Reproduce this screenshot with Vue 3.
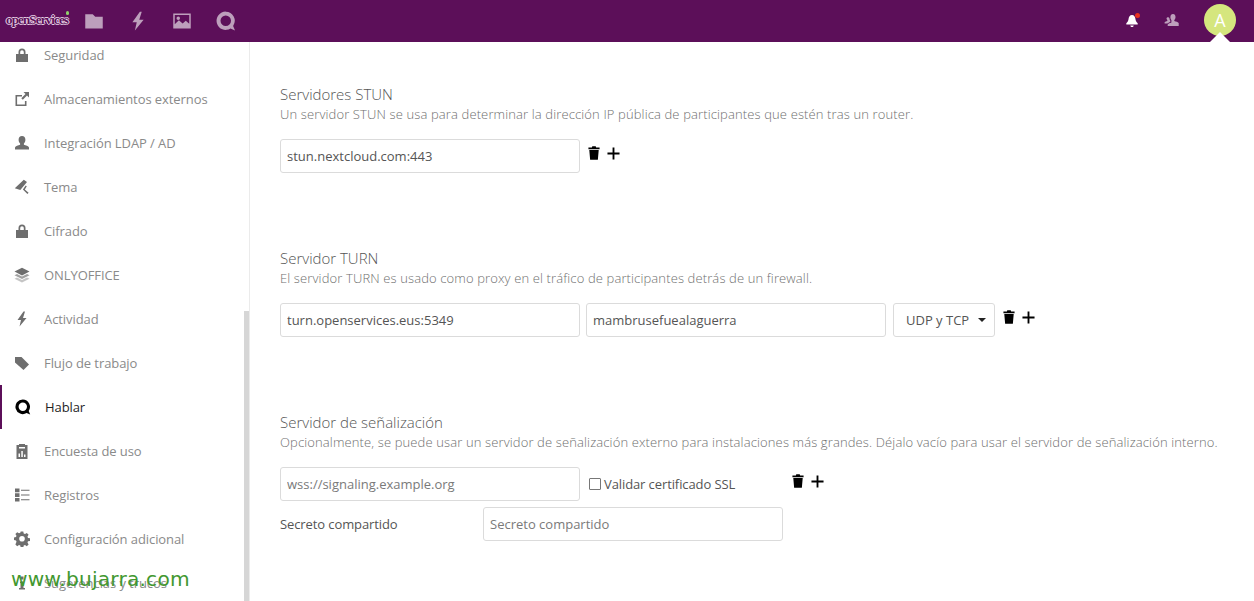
<script setup>
const navIcons = ['folder', 'bolt', 'image', 'talk']
const sideItems = [
  { label: 'Seguridad', icon: 'lock' },
  { label: 'Almacenamientos externos', icon: 'external' },
  { label: 'Integración LDAP / AD', icon: 'user' },
  { label: 'Tema', icon: 'brush' },
  { label: 'Cifrado', icon: 'lock' },
  { label: 'ONLYOFFICE', icon: 'layers' },
  { label: 'Actividad', icon: 'bolt' },
  { label: 'Flujo de trabajo', icon: 'tag' },
  { label: 'Hablar', icon: 'talk', active: true },
  { label: 'Encuesta de uso', icon: 'survey' },
  { label: 'Registros', icon: 'logs' },
  { label: 'Configuración adicional', icon: 'gear' },
  { label: 'Sugerencias y trucos', icon: 'info' }
]
const paths = {
  folder: 'M1 2.500h6l2 2h6V14H1z',
  bolt: 'M9.500 .500 3.500 9H7l-1.500 6.500L12.500 7H9l2-6.500z',
  image: 'M1 2h14v12H1zm1.200 1.200v7.300l3.300-3.200 3 2.700 2.500-2.200 2.800 2.400V3.200zM5 4.400a1.400 1.400 0 1 1 0 2.800 1.400 1.400 0 0 1 0-2.800z',
  talk: 'M7.800 .500a7.300 7.300 0 1 0 3.800 13.500l3.600 1.500-1.500-3.600A7.300 7.300 0 0 0 7.800 .500zm0 3.100a4.200 4.200 0 1 1 0 8.400 4.200 4.200 0 0 1 0-8.400z',
  lock: 'M4.500 7V5a3.500 3.500 0 0 1 7 0v2H14v8H2V7zm1.700 0h3.600V5a1.800 1.800 0 0 0-3.600 0z',
  external: 'M1.500 4H8v1.600H3.100v7.800h7.800V10h1.600v5h-11zM9.500 1H15v5.500l-2-2-4.200 4.200-1.500-1.500L11.500 3z',
  user: 'M8 1c2.200 0 3.400 1.600 3.400 3.800 0 1.600-.7 3-1.500 3.700v1.300c1.800.6 4.700 1.100 5.100 2.700V14.500H1v-2c.4-1.600 3.300-2.100 5.100-2.700V8.500C5.300 7.800 4.600 6.400 4.600 4.800 4.600 2.600 5.800 1 8 1z',
  brush: 'M9.800 .800 13 2.900 6.300 11 .800 9.200zM11.700 6.500 12.800 7.200 10.800 10.400 14.600 13.800 13.400 15 8.900 10.600z',
  tag: 'M1 2h6.500l7.500 7.500-5.500 5.500L1 7.500z',
  survey: 'M2.500 2H5V1h6v1h2.500v14h-11zm2 8.500v3.500H6v-3.500zM7.300 8v6h1.500V8zm2.700 3.500V14h1.500v-2.500zM5 4v1.500h6V4z',
  logs: 'M1 1.500h4.500v3.700H1zM1 6.200h4.500v3.700H1zM1 10.900h4.500v3.700H1zM7 2.800h8.500v1H7zM7 7.500h8.500v1H7zM7 12.200h8.500v1H7z',
  gear: 'M6.700 .500h2.600l.4 2 1.300.6 1.800-1.100 1.800 1.800-1.100 1.800.5 1.300 2 .4v2.600l-2 .4-.5 1.300 1.100 1.800-1.800 1.800-1.800-1.100-1.300.5-.4 2H6.700l-.4-2-1.300-.5-1.800 1.100-1.800-1.800L2.500 10.700 2 9.400 0 9V6.500l2-.4.500-1.300L1.400 3 3.200 1.200 5 2.300l1.300-.6zM8 5a2.800 2.800 0 1 0 0 5.600A2.800 2.800 0 0 0 8 5z',
  info: 'M6.500 1.500h3v3h-3zM6 6.500h3.500V13H11v1.500H5V13h1.500V8H6z'
}
</script>

<template>
  <div class="page">
    <header class="topbar">
      <div class="logo">
        <span class="logo-text">openServices</span>
        <span class="logo-leaf"></span>
      </div>
      <nav class="apps">
        <svg v-for="name in navIcons" :key="name" class="app-icon" viewBox="0 0 16 16"><path :d="paths[name]" fill-rule="evenodd" /></svg>
      </nav>
      <div class="right">
        <span class="bell">
          <svg viewBox="0 0 16 16" class="bell-icon"><path d="M8 1c2.500 0 3.700 2 3.900 4.500.2 2.300 1 3.700 2.600 5V12H1.500v-1.500c1.600-1.300 2.400-2.700 2.600-5C4.300 3 5.500 1 8 1zM6 13h4l-.8 1.800H6.800z" /></svg>
          <span class="dot"></span>
        </span>
        <svg viewBox="0 0 16 16" class="contacts"><path d="M9 1c1.500 0 2.500 1.200 2.500 2.900 0 1.300-.5 2.400-1.200 3v1c1.500.5 4 1 4.400 2.200V13H3.700v-1.500c.4-1 2.300-1.600 3.700-2.100V7c-.7-.7-1-1.800-1-3C6.400 2.200 7.500 1 9 1zM4.200 4.300c.5 0 1 .3 1.200.7 0 1 .3 2 .9 2.600v1.300c-1 .3-2.400.9-3 1.700H.6V9.300c.4-.7 1.700-1 2.700-1.400v-1C2.800 6.500 2.500 6 2.500 5.500c0-.7.800-1.200 1.700-1.200z" /></svg>
        <div class="avatar">A</div>
        <span class="caret"></span>
      </div>
    </header>

    <div class="body">
      <aside class="sidebar">
        <ul class="side-list">
          <li v-for="item in sideItems" :key="item.label" class="side-item" :class="{ active: item.active }">
            <svg v-if="item.icon === 'layers'" class="side-icon" viewBox="0 0 16 16">
              <path class="layer-low" d="M3 10.500 8 13l5-2.500 2.500 1.300L8 15.500.5 11.800z" />
              <path class="layer-mid" d="M3 7l5 2.500L13 7l2.500 1.300L8 12 .5 8.300z" />
              <path d="M8 .8 15.500 4.600 8 8.400.5 4.600z" />
            </svg>
            <svg v-else class="side-icon" viewBox="0 0 16 16"><path :d="paths[item.icon]" fill-rule="evenodd" /></svg>
            <span>{{ item.label }}</span>
          </li>
        </ul>
        <div class="scrollbar"></div>
      </aside>

      <main class="content">
        <section class="block">
          <h2>Servidores STUN</h2>
          <p class="hint">Un servidor STUN se usa para determinar la dirección IP pública de participantes que estén tras un router.</p>
          <div class="row">
            <input class="field" value="stun.nextcloud.com:443" />
            <span class="actions first">
              <svg class="trash" viewBox="0 0 14 16"><path d="M5 0h4l.5 1.500H13.500V3.500H.5V1.500H4.500zM1.500 4.500h11L11.500 16h-9z" /></svg>
              <svg class="plus" viewBox="0 0 14 14"><path d="M6 .5h2V6h5.500v2H8v5.500H6V8H.5V6H6z" /></svg>
            </span>
          </div>
        </section>

        <section class="block">
          <h2>Servidor TURN</h2>
          <p class="hint">El servidor TURN es usado como proxy en el tráfico de participantes detrás de un firewall.</p>
          <div class="row">
            <input class="field" value="turn.openservices.eus:5349" />
            <input class="field second" value="mambrusefuealaguerra" />
            <div class="select">UDP y TCP<span class="select-arrow"></span></div>
            <span class="actions after-select">
              <svg class="trash" viewBox="0 0 14 16"><path d="M5 0h4l.5 1.500H13.500V3.500H.5V1.500H4.500zM1.500 4.500h11L11.500 16h-9z" /></svg>
              <svg class="plus" viewBox="0 0 14 14"><path d="M6 .5h2V6h5.500v2H8v5.500H6V8H.5V6H6z" /></svg>
            </span>
          </div>
        </section>

        <section class="block">
          <h2>Servidor de señalización</h2>
          <p class="hint">Opcionalmente, se puede usar un servidor de señalización externo para instalaciones más grandes. Déjalo vacío para usar el servidor de señalización interno.</p>
          <div class="row">
            <input class="field" placeholder="wss://signaling.example.org" />
            <label class="check"><span class="box"></span>Validar certificado SSL</label>
            <span class="actions after-check">
              <svg class="trash" viewBox="0 0 14 16"><path d="M5 0h4l.5 1.500H13.500V3.500H.5V1.500H4.500zM1.500 4.500h11L11.500 16h-9z" /></svg>
              <svg class="plus" viewBox="0 0 14 14"><path d="M6 .5h2V6h5.500v2H8v5.500H6V8H.5V6H6z" /></svg>
            </span>
          </div>
          <div class="row secret">
            <span class="secret-label">Secreto compartido</span>
            <input class="field" placeholder="Secreto compartido" />
          </div>
        </section>
      </main>
    </div>

    <div class="watermark">www.bujarra.com</div>
  </div>
</template>

<style>
html, body { margin: 0; padding: 0; background: #fff; overflow: hidden; }
</style>

<style scoped>
.page {
  position: relative;
  width: 1254px;
  height: 601px;
  overflow: hidden;
  font-family: "Open Sans", "Liberation Sans", sans-serif;
  font-size: 13px;
  color: #555;
  background: #fff;
}
.topbar {
  height: 42px;
  background: #5c0f59;
  display: flex;
  align-items: center;
  position: relative;
  z-index: 2;
}
.logo {
  position: relative;
  width: 62px;
  margin: -3px 0 0 6px;
  flex: none;
}
.logo-text {
  display: block;
  font-family: "Liberation Serif", serif;
  font-size: 13px;
  font-weight: 700;
  letter-spacing: -0.85px;
  line-height: 14px;
  color: #5c0f59;
  text-shadow: 1px 0 0 #e6cfe5, -1px 0 0 #e6cfe5, 0 1px 0 #e6cfe5, 0 -1px 0 #e6cfe5;
  white-space: nowrap;
}
.logo-leaf {
  position: absolute;
  right: -1px;
  top: -2px;
  width: 3px;
  height: 4px;
  border-radius: 2px;
  background: #8fd36a;
}
.apps {
  display: flex;
  align-items: center;
  gap: 24px;
  margin-left: 16px;
}
.app-icon { width: 20px; height: 20px; fill: #bd9fbc; display: block; }
.right {
  margin-left: auto;
  display: flex;
  align-items: center;
  align-self: stretch;
  position: relative;
  padding-right: 18px;
}
.bell { position: relative; width: 14px; height: 14px; display: block; margin: 0 25px 1px 0; }
.bell-icon { width: 14px; height: 14px; fill: #fff; display: block; }
.dot {
  position: absolute;
  top: -1px;
  right: -1px;
  width: 5px;
  height: 5px;
  border-radius: 50%;
  background: #e9321f;
}
.contacts { width: 16px; height: 16px; fill: #bd9fbc; margin-right: 24px; display: block; }
.avatar {
  width: 32px;
  height: 32px;
  margin-bottom: 2px;
  border-radius: 50%;
  background: #d5e67e;
  color: #fff;
  font-size: 18px;
  line-height: 32px;
  text-align: center;
}
.caret {
  position: absolute;
  right: 24px;
  bottom: 0;
  width: 0;
  height: 0;
  border-left: 10px solid transparent;
  border-right: 10px solid transparent;
  border-bottom: 10px solid #fff;
}
.body { display: flex; height: 559px; }
.sidebar {
  position: relative;
  width: 249px;
  flex: none;
  border-right: 1px solid #ebebeb;
  overflow: hidden;
}
.side-list { list-style: none; margin: -9px 0 0; padding: 0; }
.side-item {
  height: 44px;
  display: flex;
  align-items: center;
  padding-left: 14px;
  color: #8a8a8a;
  font-size: 13px;
  letter-spacing: -0.08px;
  box-sizing: border-box;
}
.side-icon { width: 16px; height: 16px; fill: #6e6e6e; margin-right: 14px; flex: none; }
.layer-mid { opacity: 0.65; }
.layer-low { opacity: 0.4; }
.side-item.active {
  border-left: 2px solid #5c0f59;
  padding-left: 13px;
  color: #1f1f1f;
}
.side-item.active .side-icon { fill: #000; }
.scrollbar {
  position: absolute;
  right: 0;
  bottom: 0;
  width: 5px;
  height: 290px;
  background: #d6d6d6;
}
.content { flex: 1; padding: 43px 0 0 30px; min-width: 0; }
.block { height: 164px; }
h2 {
  margin: 0;
  font-size: 15px;
  font-weight: 300;
  line-height: 18px;
  color: #555;
}
.hint {
  margin: 2px 0 0;
  font-size: 13px;
  letter-spacing: 0.125px;
  font-weight: 300;
  line-height: 18px;
  color: #6f6f6f;
  white-space: nowrap;
}
.row { display: flex; align-items: center; margin-top: 16px; height: 34px; position: relative; }
.field {
  width: 300px;
  height: 34px;
  box-sizing: border-box;
  border: 1px solid #dbdbdb;
  border-radius: 3px;
  padding: 0 6px;
  font: 13px "Open Sans", sans-serif;
  color: #555;
  background: #fff;
  outline: none;
}
.field::placeholder { color: #7a7a7a; opacity: 1; }
.second { margin-left: 6px; }
.select {
  width: 102px;
  height: 34px;
  margin-left: 7px;
  box-sizing: border-box;
  border: 1px solid #dbdbdb;
  border-radius: 3px;
  padding-left: 12px;
  display: flex;
  align-items: center;
  color: #555;
  font-size: 13px;
}
.select-arrow {
  margin-left: 9px;
  width: 0;
  height: 0;
  border-left: 4px solid transparent;
  border-right: 4px solid transparent;
  border-top: 4px solid #222;
}
.actions { display: flex; align-items: center; gap: 7px; align-self: flex-start; margin-top: 7px; }
.first { margin-left: 8px; }
.after-select { margin-left: 8px; }
.after-check { margin-left: 57px; }
.trash { width: 12px; height: 14px; fill: #000; display: block; }
.plus { width: 13px; height: 13px; fill: #000; display: block; }
.check { display: flex; align-items: center; margin-left: 9px; color: #555; letter-spacing: -0.1px; }
.box {
  width: 10px;
  height: 10px;
  border: 1px solid #777;
  border-radius: 1px;
  margin-right: 3px;
  background: #fff;
}
.secret { margin-top: 6px; }
.secret-label { width: 203px; letter-spacing: -0.1px; }
.watermark {
  position: absolute;
  left: 11px;
  top: 566px;
  font-family: "DejaVu Sans", sans-serif;
  font-size: 20.200px;
  letter-spacing: 0.2px;
  line-height: 26px;
  color: #429830;
  white-space: nowrap;
}
</style>
